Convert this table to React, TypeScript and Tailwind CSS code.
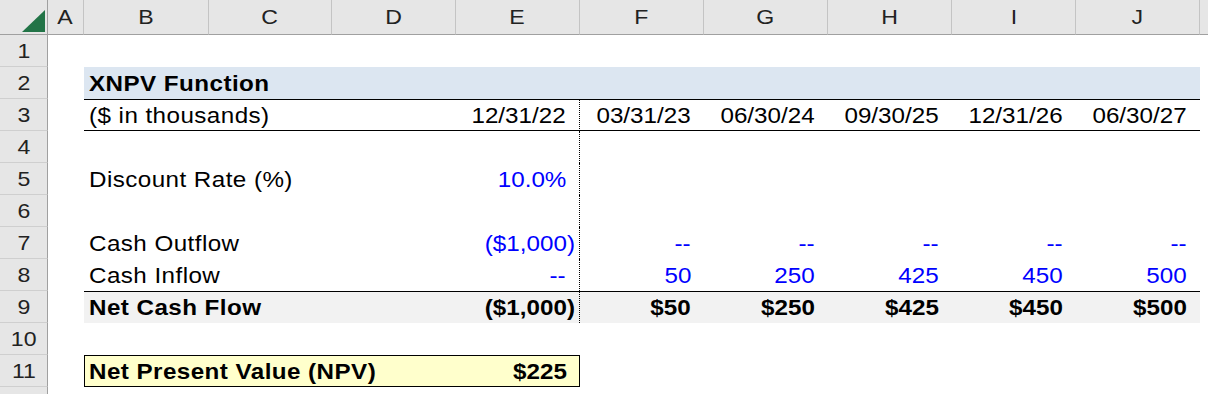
import clsx from 'clsx'
import type { ReactNode } from 'react'

const FONT = { fontFamily: '"Liberation Sans", Arial, sans-serif' }
const COLS = ['A', 'B', 'C', 'D', 'E', 'F', 'G', 'H', 'I', 'J']

// Excel renders a bit wide, so text is stretched horizontally
function T({ children, right, bold, blue }: { children: ReactNode; right?: boolean; bold?: boolean; blue?: boolean }) {
  return (
    <span
      className={clsx(
        'inline-block whitespace-nowrap scale-x-110',
        right ? 'origin-right' : 'origin-left tracking-[0.4px]',
        bold && 'font-bold',
        blue ? 'text-[#0000ff]' : 'text-black'
      )}
    >
      {children}
    </span>
  )
}

function RowHead({ n }: { n?: number }) {
  return (
    <div className="flex items-center justify-center bg-[#e6e6e6] border-r border-r-[#a0a0a0] border-b border-b-[#cfcfcf] text-[21px] text-[#222]">
      {n && <span className="inline-block scale-x-110">{n}</span>}
    </div>
  )
}

type Cell = { v?: string; blue?: boolean; neg?: boolean }

function DataRow({
  n,
  label,
  e,
  rest,
  bold,
  top,
  bottom,
  fill,
  dotted = true,
}: {
  n: number
  label?: string
  e?: Cell
  rest?: Cell[]
  bold?: boolean
  top?: boolean
  bottom?: boolean
  fill?: string
  dotted?: boolean
}) {
  const lines = clsx(top && 'border-t border-t-black', bottom && 'border-b border-b-black', fill)
  const cells = rest ?? [{}, {}, {}, {}, {}]
  return (
    <>
      <RowHead n={n} />
      <div />
      <div className={clsx('col-span-3 flex items-center pl-[5px]', lines)}>
        {label && <T bold={bold}>{label}</T>}
      </div>
      <div
        className={clsx(
          'flex items-center justify-end',
          e?.neg ? 'pr-[4px]' : 'pr-[13px]',
          dotted && 'border-r border-r-black [border-right-style:dotted]',
          lines
        )}
      >
        {e?.v && (
          <T right bold={bold} blue={e.blue}>
            {e.v}
          </T>
        )}
      </div>
      {cells.map((c, i) => (
        <div key={i} className={clsx('flex items-center justify-end pr-[13px]', lines)}>
          {c.v && (
            <T right bold={bold} blue={c.blue}>
              {c.v}
            </T>
          )}
        </div>
      ))}
      <div />
    </>
  )
}

function EmptyRow({ n }: { n?: number }) {
  return (
    <>
      <RowHead n={n} />
      <div className="col-span-11" />
    </>
  )
}

export default function App() {
  const dashes = [1, 2, 3, 4, 5].map(() => ({ v: '--', blue: true }))
  return (
    <div className="h-[394px] w-[1208px] overflow-hidden bg-white" style={FONT}>
      <div className="grid grid-cols-[48px_36px_125px_123px_124px_124px_124px_124px_124px_124px_124px_8px] grid-rows-[35px] auto-rows-[32px] text-[22px]">
        {/* column headers */}
        <div className="relative bg-[#e6e6e6] border-r border-r-[#a0a0a0] border-b border-b-[#a0a0a0]">
          <svg className="absolute left-[22px] top-[10px]" width="23" height="22" viewBox="0 0 23 22">
            <polygon points="23,0 23,22 0,22" fill="#227447" />
          </svg>
        </div>
        {COLS.map((c) => (
          <div
            key={c}
            className="flex items-center justify-center bg-[#e6e6e6] border-r border-r-[#c4c4c4] border-b border-b-[#a0a0a0] text-[21px] text-[#222]"
          >
            <span className="inline-block scale-x-110">{c}</span>
          </div>
        ))}
        <div className="bg-[#e6e6e6] border-b border-b-[#a0a0a0]" />

        <EmptyRow n={1} />

        <RowHead n={2} />
        <div />
        <div className="col-span-9 flex items-center pl-[5px] bg-[#dce6f1]">
          <T bold>XNPV Function</T>
        </div>
        <div />

        <DataRow
          n={3}
          label="($ in thousands)"
          e={{ v: '12/31/22' }}
          rest={['03/31/23', '06/30/24', '09/30/25', '12/31/26', '06/30/27'].map((v) => ({ v }))}
          top
          bottom
        />
        <DataRow n={4} />
        <DataRow n={5} label="Discount Rate (%)" e={{ v: '10.0%', blue: true }} />
        <DataRow n={6} />
        <DataRow n={7} label="Cash Outflow" e={{ v: '($1,000)', blue: true, neg: true }} rest={dashes} />
        <DataRow
          n={8}
          label="Cash Inflow"
          e={{ v: '--', blue: true }}
          rest={['50', '250', '425', '450', '500'].map((v) => ({ v, blue: true }))}
        />
        <DataRow
          n={9}
          label="Net Cash Flow"
          bold
          top
          fill="bg-[#f2f2f2]"
          e={{ v: '($1,000)', neg: true }}
          rest={['$50', '$250', '$425', '$450', '$500'].map((v) => ({ v }))}
        />
        <EmptyRow n={10} />

        <RowHead n={11} />
        <div />
        <div className="col-span-4 flex items-center justify-between border border-black bg-[#ffffcc] pl-[4px] pr-[12px]">
          <T bold>Net Present Value (NPV)</T>
          <T bold right>
            $225
          </T>
        </div>
        <div className="col-span-6" />

        {/* row 12 is cut off by the window, its number falls below the edge */}
        <EmptyRow />
      </div>
    </div>
  )
}
